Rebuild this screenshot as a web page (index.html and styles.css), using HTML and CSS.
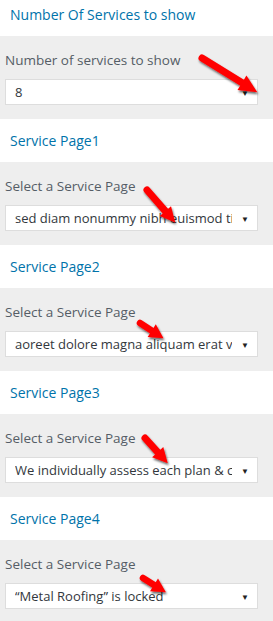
FILE: index.html
```html
<!DOCTYPE html>
<html lang="en">

<head>
    <meta charset="UTF-8">
    <meta name="viewport" content="width=device-width, initial-scale=1.0">
    <title>Service Settings</title>
    <link rel="stylesheet" href="styles.css">
</head>

<body>
    <div class="panel">
        <!-- Number of services -->
        <div class="section first">
            <h3 class="section-title">Number Of Services to show</h3>
            <div class="control">
                <label class="control-label">Number of services to show</label>
                <div class="select"><span class="select-text">8</span><span class="select-arrow">&#9660;</span></div>
            </div>
        </div>

        <div class="section">
            <h3 class="section-title">Service Page1</h3>
            <div class="control">
                <label class="control-label">Select a Service Page</label>
                <div class="select"><span class="select-text">sed diam nonummy nibh euismod tincidunt</span><span class="select-arrow">&#9660;</span></div>
            </div>
        </div>

        <div class="section">
            <h3 class="section-title">Service Page2</h3>
            <div class="control">
                <label class="control-label">Select a Service Page</label>
                <div class="select"><span class="select-text">aoreet dolore magna aliquam erat volutpat</span><span class="select-arrow">&#9660;</span></div>
            </div>
        </div>

        <div class="section">
            <h3 class="section-title">Service Page3</h3>
            <div class="control">
                <label class="control-label">Select a Service Page</label>
                <div class="select"><span class="select-text">We individually assess each plan &amp; carefully</span><span class="select-arrow">&#9660;</span></div>
            </div>
        </div>

        <div class="section">
            <h3 class="section-title">Service Page4</h3>
            <div class="control">
                <label class="control-label">Select a Service Page</label>
                <div class="select"><span class="select-text">&ldquo;Metal Roofing&rdquo; is locked</span><span class="select-arrow">&#9660;</span></div>
            </div>
        </div>

        <!-- Red pointer arrows drawn over the panel -->
        <svg class="arrows" width="273" height="621" viewBox="0 0 273 621">
            <defs>
                <filter id="shadow" x="-30%" y="-30%" width="160%" height="160%">
                    <feDropShadow dx="1" dy="2" stdDeviation="1.2" flood-color="#000" flood-opacity="0.6"/>
                </filter>
            </defs>
            <g fill="#f00" stroke="#f00" stroke-linecap="round" filter="url(#shadow)">
                <g transform="translate(202 58) rotate(31.7)">
                    <line x1="0" y1="0" x2="50" y2="0" stroke-width="7"/>
                    <polygon points="47,-8.5 65,0 47,8.5" stroke="none"/>
                </g>
                <g transform="translate(147 190) rotate(49)">
                    <line x1="0" y1="0" x2="30" y2="0" stroke-width="7"/>
                    <polygon points="28,-7.5 43,0 28,7.5" stroke="none"/>
                </g>
                <g transform="translate(140 323) rotate(33)">
                    <line x1="0" y1="0" x2="16" y2="0" stroke-width="6.5"/>
                    <polygon points="14,-7.5 28,0 14,7.5" stroke="none"/>
                </g>
                <g transform="translate(145 438) rotate(48)">
                    <line x1="0" y1="0" x2="21" y2="0" stroke-width="7"/>
                    <polygon points="19,-7.5 34,0 19,7.5" stroke="none"/>
                </g>
                <g transform="translate(143 578) rotate(32)">
                    <line x1="0" y1="0" x2="15" y2="0" stroke-width="6.5"/>
                    <polygon points="13,-7.5 27,0 13,7.5" stroke="none"/>
                </g>
            </g>
        </svg>
    </div>
</body>

</html>
```

FILE: styles.css
```css
* {
    box-sizing: border-box;
    margin: 0;
    padding: 0;
}

body {
    font-family: "Open Sans", "Noto Sans", sans-serif;
    background-color: #fff;
    color: #555d66;
    width: 273px;
}

.panel {
    position: relative;
    width: 273px;
    height: 621px;
    overflow: hidden;
}

.section {
    margin-top: 7px;
}

.section.first {
    margin-top: 0;
}

.section-title {
    height: 36px;
    padding: 5px 0 0 10px;
    font-size: 14px;
    line-height: 20px;
    font-weight: normal;
    color: #0073aa;
}

.control {
    background-color: #eee;
    padding: 14px 15px 14px 5px;
    height: 83px;
}

.control-label {
    display: block;
    font-size: 13.5px;
    line-height: 20px;
    color: #555d66;
    margin-bottom: 9px;
}

.select {
    display: flex;
    align-items: center;
    height: 26px;
    background-color: #fff;
    border: 1px solid #ddd;
    padding: 0 8px 0 9px;
}

.select-text {
    flex: 1;
    min-width: 0;
    white-space: nowrap;
    overflow: hidden;
    font-size: 13px;
    color: #32373c;
    margin-right: 9px;
}

.select-arrow {
    flex: none;
    font-size: 8px;
    color: #222;
}

.arrows {
    position: absolute;
    left: 0;
    top: 0;
    pointer-events: none;
}
```
